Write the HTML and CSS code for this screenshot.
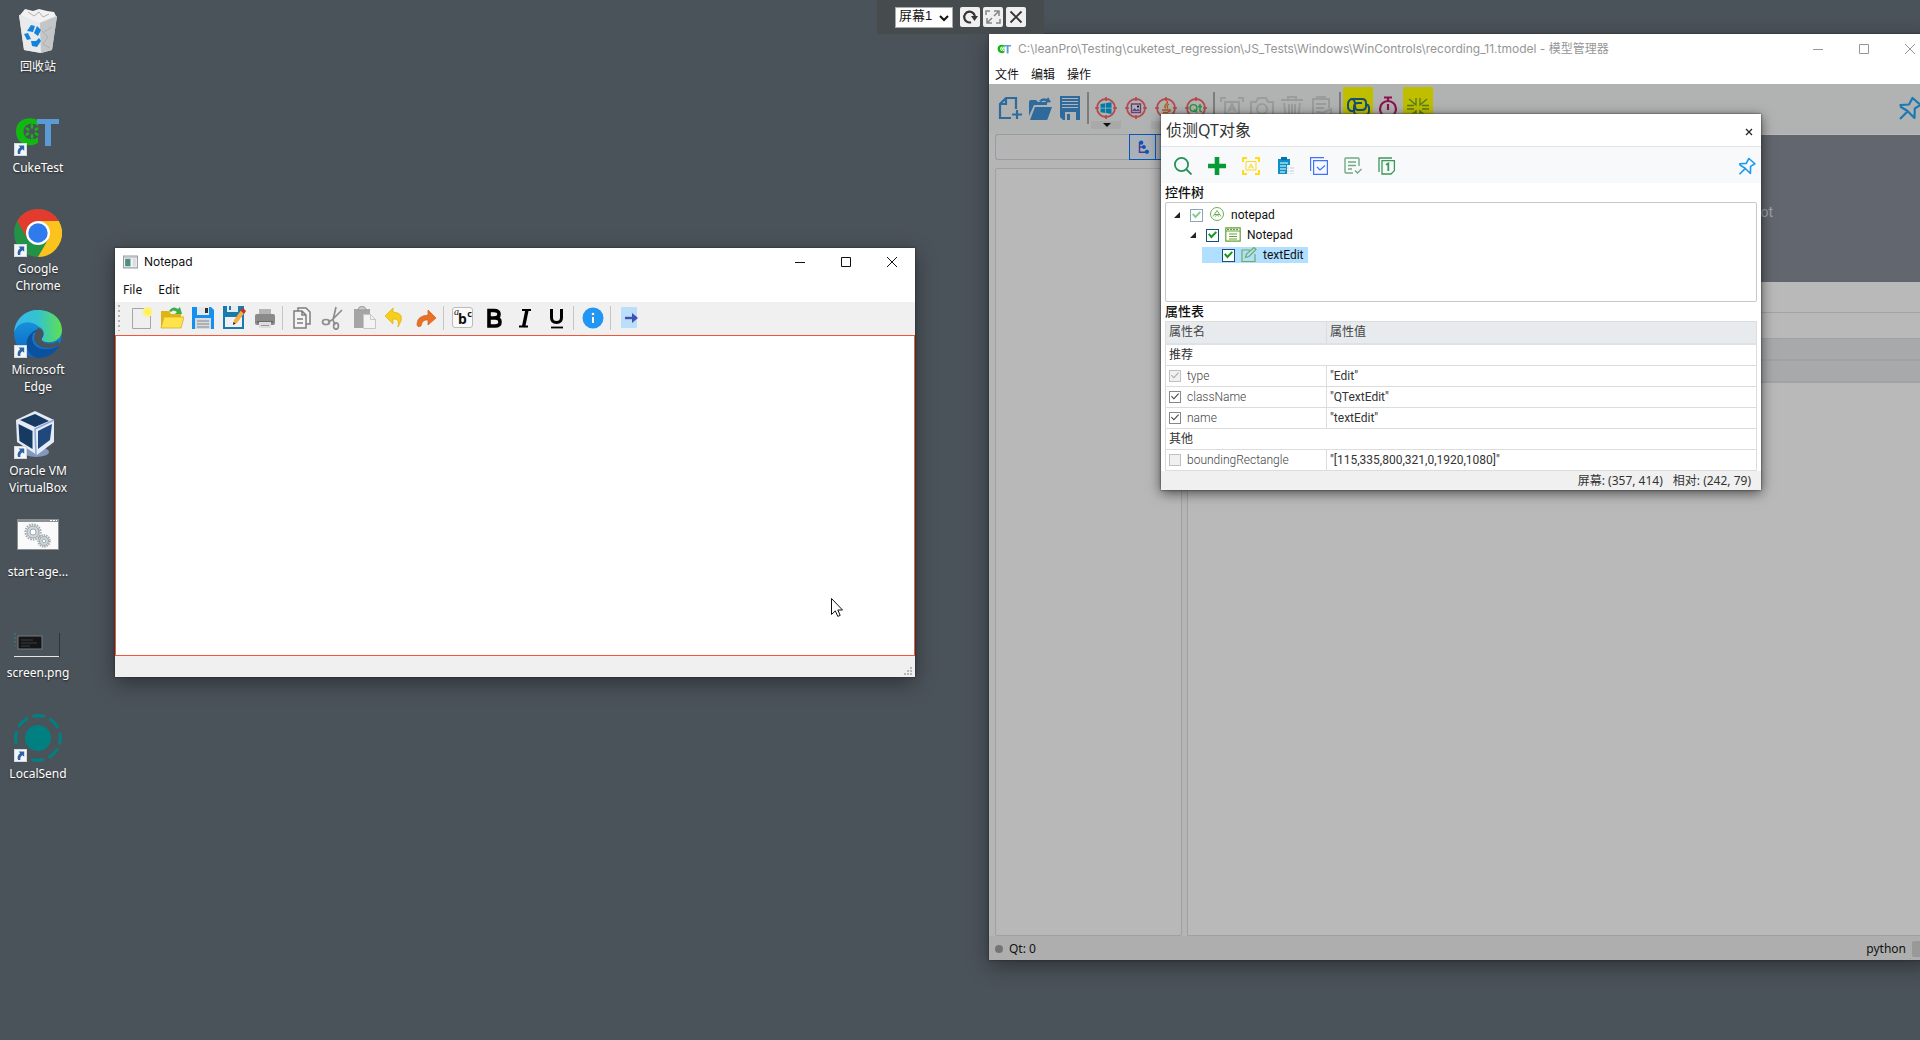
FILE: index.html
```html
<!DOCTYPE html>
<html lang="zh-CN">
<head>
<meta charset="utf-8">
<title>模型管理器</title>
<link rel="stylesheet" href="styles.css">
</head>
<body>
<svg class="defs" aria-hidden="true">
  <defs>
    <symbol id="shortcut" viewBox="0 0 13 13"><rect x=".5" y=".5" width="12" height="12" fill="#f4f6f8" stroke="#d4d8dc"/><path d="M4.600 2.400h5.600v5.400L8.400 6.200C6.600 7.400 6 8.600 6.400 11L4 11C3 8.200 3.900 5.800 6.200 4.200z" fill="#2c62a8"/></symbol>
    <symbol id="pushpin" viewBox="0 0 24 24"><path d="M14.500 2 22.500 9 16.800 12.500 16.500 22 9.500 15 3 11 2.500 9 11 8.500ZM9.500 15.500 2 23" fill="none" stroke="currentColor" stroke-width="2.200" stroke-linejoin="round"/></symbol>
    <symbol id="target" viewBox="0 0 24 24"><circle cx="12" cy="12" r="9" fill="none" stroke="#b5484a" stroke-width="1.800"/><path d="M12 1v4M12 19v4M1 12h4M19 12h4" stroke="#b5484a" stroke-width="1.600"/></symbol>
    <symbol id="ct" viewBox="0 0 48 30"><path d="M24 3.500C18-1 2 0 2 14.500S18 31 24 25.500V20c-4 4-14.500 3-14.500-5.500S20 5 24 9z" fill="#12b812"/><g fill="#12b812"><ellipse cx="18" cy="9.500" rx="1.300" ry="2.400"/><ellipse cx="18" cy="19.500" rx="1.300" ry="2.400"/><ellipse cx="13.500" cy="12" rx="2.300" ry="1.300" transform="rotate(30 13.500 12)"/><ellipse cx="22.500" cy="12" rx="2.300" ry="1.300" transform="rotate(-30 22.500 12)"/><ellipse cx="13.500" cy="17" rx="2.300" ry="1.300" transform="rotate(-30 13.500 17)"/><ellipse cx="22.500" cy="17" rx="2.300" ry="1.300" transform="rotate(30 22.500 17)"/></g><path d="M23 2h22v5h-8v22h-6V7h-8z" fill="#5b9bd5"/></symbol>
    <linearGradient id="e1" x1="0" x2="1"><stop offset="0" stop-color="#35b8f0"/><stop offset=".5" stop-color="#34c3cf"/><stop offset="1" stop-color="#5fe04c"/></linearGradient>
    <linearGradient id="e2" x1="0" y1="0" x2="0" y2="1"><stop offset="0" stop-color="#1b9de2"/><stop offset="1" stop-color="#0b66c3"/></linearGradient>
  </defs>
</svg>
<main class="desktop">
  <nav class="shortcuts" aria-label="桌面">
    <a class="shortcut" href="#"><svg class="pic" viewBox="0 0 48 48"><path d="M5 8 43 9 38 43 27 46 10 43z" fill="#d9dadb"/><path d="M5 8 10 43 27 46 26 16z" fill="#e9eaeb"/><path d="m26 16 1 30 11-3 5-34z" fill="#c3c5c7"/><path d="m6 8 5-6 8 2 6-2 8 2 7 1 2 4-17 7z" fill="#f2f2f2"/><path d="m14 5 6 4 5-4 4 5 6-3M28 24l6 6-5 7 7 4M38 20l-8 5" stroke="#aeb1b4" fill="none"/><path d="m13 24 4-6 4 1-2 6zM23 19l4 4-3 6-4-3zM10 27l4-1 3 6-4 1zM17 34l5 0 3-3 2 3-4 6-5-1z" fill="#1583dc"/></svg><span>回收站</span></a>
    <a class="shortcut" href="#"><svg class="pic" viewBox="0 0 48 48"><use href="#ct" x="0" y="9" width="48" height="30"/><use href="#shortcut" y="35" width="13" height="13"/></svg><span>CukeTest</span></a>
    <a class="shortcut" href="#"><svg class="pic" viewBox="0 0 48 48"><circle cx="24" cy="24" r="24" fill="#229247"/><path d="M3.200 12A24 24 0 0 1 44.800 12H24L13.600 30z" fill="#e33b2e"/><path d="M44.800 12A24 24 0 0 1 24 48L34.400 30 24 12z" fill="#fcc31e"/><circle cx="24" cy="24" r="12" fill="#fff"/><circle cx="24" cy="24" r="9.700" fill="#2f7bee"/><use href="#shortcut" y="35" width="13" height="13"/></svg><span>Google<br>Chrome</span></a>
    <a class="shortcut" href="#"><svg class="pic" viewBox="0 0 48 48"><circle cx="24" cy="24" r="23.800" fill="url(#e2)"/><path d="M0 23C1 8 12 0 24 0c14 0 24 9 24 20 0 9-8 13-16 12-5-1-5-3-3-5 2-3 1-8-5-11C15 9 3 12 0 23z" fill="url(#e1)"/><path d="M19 24c-4 12 8 20 26 12-4 8-12 12-21 12-11-1-18-20-2-28 4-1 7 2 7 7-1-4-8-7-10-3z" fill="#0c519e"/><path d="M24 18c4 0 6 4 5 8-2 3-2 5 2 7 4 1 10 1 13-2l2 4c-10 5-24 4-26-6 0-4 1-8 4-11z" fill="#4b535a"/><use href="#shortcut" y="35" width="13" height="13"/></svg><span>Microsoft<br>Edge</span></a>
    <a class="shortcut" href="#"><svg class="pic" viewBox="0 0 48 48"><ellipse cx="22" cy="41" rx="13" ry="5" fill="#8298bd"/><path d="M21 0 40 9v22L23 44 3 31 2 9z" fill="#e4ebf5"/><path d="M21 3 35 10 21 16 6 9z" fill="#173a63"/><path d="m4.500 13 14 7v18l-13-8z" fill="#173a63"/><path d="m38 13-14 7v18l12-9z" fill="#20487c"/><path d="m40 9-19 9 1 26" fill="none" stroke="#8ba6d8" stroke-width="1.500"/><use href="#shortcut" y="35" width="13" height="13"/></svg><span>Oracle VM<br>VirtualBox</span></a>
    <a class="shortcut" href="#"><svg class="pic" viewBox="0 0 48 48"><rect x="3.500" y="7.500" width="41" height="30" fill="#fafafa" stroke="#8b8f92"/><path d="M3 7h42v3H3z" fill="#8b9094"/><path d="M36 8.500h7" stroke="#fff" stroke-dasharray="2 1"/><g fill="none" stroke="#9ea8ae"><circle cx="19" cy="20" r="7.500" stroke-width="2.200" stroke-dasharray="1.500 1.100"/><circle cx="19" cy="20" r="6" fill="#cfd6da"/><circle cx="19" cy="20" r="3" fill="#fff"/><circle cx="30" cy="29" r="5.800" stroke-width="2" stroke-dasharray="1.400 1"/><circle cx="30" cy="29" r="4.500" fill="#cfd6da"/><circle cx="30" cy="29" r="1.800" fill="#fff"/></g></svg><span>start-age...</span></a>
    <a class="shortcut" href="#"><svg class="pic" viewBox="0 0 48 48"><path d="M0 43.500h45" stroke="#e4e8e0"/><path d="M45.500 20v24" stroke="#2f3437"/><path d="M1 20v13" stroke="#3b7fa0" stroke-dasharray="2 2"/><rect x="4" y="23" width="24" height="13" fill="#141516" stroke="#777b7d"/><path d="M7 27h12M7 30h16M7 33h9" stroke="#3a3c3d"/></svg><span>screen.png</span></a>
    <a class="shortcut" href="#"><svg class="pic" viewBox="0 0 48 48"><circle cx="24" cy="24" r="13" fill="#008080"/><circle cx="24" cy="24" r="22.300" fill="none" stroke="#008080" stroke-width="3.200" stroke-linecap="round" stroke-dasharray="10 7.514" stroke-dashoffset="5"/><use href="#shortcut" y="35" width="13" height="13"/></svg><span>LocalSend</span></a>
  </nav>

  <section class="window model">
    <header class="titlebar model-title">
      <svg class="app" viewBox="0 0 48 30"><use href="#ct"/></svg>
      <h1>C:\leanPro\Testing\cuketest_regression\JS_Tests\Windows\WinControls\recording_11.tmodel - 模型管理器</h1>
      <span class="sys"><button aria-label="最小化"><svg viewBox="0 0 10 10"><path d="M0 5.500h10"/></svg></button><button aria-label="最大化"><svg viewBox="0 0 10 10"><path d="M.5.500h9v9h-9z"/></svg></button><button aria-label="关闭"><svg viewBox="0 0 10 10"><path d="m0 0 10 10M10 0 0 10"/></svg></button></span>
    </header>
    <nav class="menu model-menu"><button>文件</button><button>编辑</button><button>操作</button></nav>
    <div class="model-body">
      <div class="model-tools">
        <button aria-label="新建"><svg viewBox="0 0 24 24" fill="none" stroke="#2f6a9c" stroke-width="2.200"><path d="M13 22H2V8l6-6h10v11M8 2v6H2M19 14v9M14 18.500h10"/></svg></button>
        <button aria-label="打开"><svg viewBox="0 0 24 24" fill="#2f6a9c"><path d="M1 6q0-2 2-2h5l2 2h9v3H6L1 20z"/><path d="M7 11h17l-4 11q0 2-2 2H2z"/><path d="M11 5q3-4 8-2l1-2 3 5-6 1 1-2q-3-1-5 1z"/></svg></button>
        <button aria-label="保存"><svg viewBox="0 0 24 24"><path d="M2 0h20v24H5l-3-3z" fill="#2f6a9c"/><path d="M4 2.500h16M4 5.500h16M4 8.500h16M4 11.500h16" stroke="#b1b3b2" stroke-width="1.200"/><path d="M7 16h11v8H7z" fill="#b1b3b2"/><path d="M9 18h3v6H9z" fill="#2f6a9c"/></svg></button>
        <i></i>
        <button class="drop" aria-label="Windows"><svg viewBox="0 0 24 24"><use href="#target"/><path d="m6.500 8 4.800-.8v4.500H6.500zm5.500-.9 5.500-.9v5.500H12zM6.500 12.500h4.800V17l-4.800-.8zm5.500 0h5.500v5.500l-5.500-.9z" fill="#007ba8"/></svg></button>
        <button aria-label="图像"><svg viewBox="0 0 24 24"><use href="#target"/><path d="M7.500 8h9v8.500h-9z" fill="none" stroke="#69407e" stroke-width="1.400"/><path d="m8 15 2.500-3 2 2 1.500-1.500L16 15z" fill="#69407e"/><circle cx="14" cy="10.500" r="1"/></svg></button>
        <button class="drop" aria-label="Java"><svg viewBox="0 0 24 24"><use href="#target"/><path d="M13 5q1 2-1 3.500t-.5 4M15 8q-3 2-1 4.500M8 14h7q2-1 1 1l-2 1M9 16.500h5M8 18.500h8" fill="none" stroke="#b0561b" stroke-width="1.300"/></svg></button>
        <button aria-label="Qt"><svg viewBox="0 0 24 24"><use href="#target"/><circle cx="9.500" cy="12" r="3.400" fill="none" stroke="#27933f" stroke-width="1.400"/><path d="m10 13.500 3 3M16 8v6.500q0 1.500 2 1M14 10.500h4" fill="none" stroke="#27933f" stroke-width="1.400"/></svg></button>
        <i></i>
        <button aria-label="截取"><svg class="off" viewBox="0 0 24 24"><path d="M1 6V2h5M18 2h5v4M1 18v4h5M18 22h5v-4M5 6h14v12H5zM8.500 15.500 12 8l3.500 7.500M10 13h4"/></svg></button>
        <button aria-label="相机"><svg class="off" viewBox="0 0 24 24"><path d="M1 6h5l2-4h8l2 4h5v16H1z"/><circle cx="12" cy="13" r="5"/></svg></button>
        <button aria-label="删除"><svg class="off" viewBox="0 0 24 24"><path d="M1 4h22M8 3V1h8v2M4 7l2 16h12l2-16M9 8v14M12 8v14M15 8v14"/></svg></button>
        <button aria-label="粘贴"><svg class="off" viewBox="0 0 24 24"><path d="M9 22H3V3h16v9M7 3V1h8v3M6 8h10M6 12h8M6 16h5M12 17l9-4v9h-9z"/></svg></button>
        <i></i>
        <button class="on" aria-label="链接"><svg viewBox="0 0 24 24" fill="none" stroke="#17506e" stroke-width="2"><path d="M9 11V8q0-5-4-5 -3 2-3 5v3q0 3 3 4h2M5 3h11q4 0 4 4v3q0 4-4 4h-4q-3 0-3-4M16 7h-4q-4 0-4 4v4q0 4 4 4h7q4 0 4-4v-3q0-3-3-4"/></svg></button>
        <button aria-label="计时"><svg viewBox="0 0 24 24" fill="none" stroke="#8e104e" stroke-width="2.200"><circle cx="12" cy="13" r="8"/><path d="M8 1.500h8M12 2v3M12 8v6"/></svg></button>
        <button class="on" aria-label="聚焦"><svg viewBox="0 0 24 24" fill="none" stroke="#557c1c" stroke-width="1.300"><path d="m3 3 7 6V2M21 3l-7 6V2M1 9.500h7M16 9.500h7M1 13h7M16 13h7M3 21l7-6v7M21 21l-7-6v7"/></svg></button>
        <button class="edge" aria-label="固定"><svg viewBox="0 0 24 24"><use href="#pushpin"/></svg></button>
      </div>
      <div class="model-main">
        <aside class="left">
          <div class="search"><input type="text" aria-label="搜索"><button aria-label="树"><svg viewBox="0 0 16 16"><path d="M4 2v12h7M4 8h4" fill="none" stroke="#4a3799" stroke-width="1.600"/><circle cx="6" cy="3" r="2.400" fill="#0757b8"/><circle cx="9" cy="8" r="2.200" fill="#0757b8"/><circle cx="12.500" cy="13.500" r="2.400" fill="#0757b8"/></svg></button><button aria-label="列表"></button></div>
          <div class="panel"></div>
        </aside>
        <div class="right">
          <div class="shot"><span>Screenshot</span></div>
          <div class="line"></div><div class="line two"></div>
          <div class="band"></div><div class="band"></div>
        </div>
      </div>
      <footer class="model-status"><span class="dot"></span><span>Qt: 0</span><span class="lang">python</span><span class="grip"></span></footer>
    </div>
  </section>

  <section class="window notepad">
    <header class="titlebar">
      <svg class="note-app" viewBox="0 0 14 12"><path d="M.5.500h13v11H.5z" fill="#f4f4f4" stroke="#9a9fa4"/><path d="M1 1h12v1.500H1z" fill="#c9cdd1"/><path d="M2 3h5v7H2z" fill="#4b8f86"/><path d="M9 3h3v7H9z" fill="#d9dde0"/></svg>
      <h2>Notepad</h2>
      <span class="sys"><button aria-label="Minimize"><svg viewBox="0 0 10 10"><path d="M0 5.500h10"/></svg></button><button aria-label="Maximize"><svg viewBox="0 0 10 10"><path d="M.5.500h9v9h-9z"/></svg></button><button aria-label="Close"><svg viewBox="0 0 10 10"><path d="m0 0 10 10M10 0 0 10"/></svg></button></span>
    </header>
    <nav class="menu"><button>File</button><button>Edit</button></nav>
    <div class="note-tools">
      <span class="handle"></span>
      <button aria-label="New"><svg viewBox="0 0 24 24"><path d="M3.500 2.500h18v20h-18z" fill="#efefef" stroke="#a5a5a5"/><circle cx="18.500" cy="6" r="5" fill="#faf28a"/><circle cx="18.500" cy="6" r="2.800" fill="#fff04a"/></svg></button>
      <button aria-label="Open"><svg viewBox="0 0 24 24"><path d="M1 5h8l2 3h10v14H1z" fill="#dfb513"/><path d="M9 5q4-6 9-2l2-2 2 7h-7l2-2q-4-3-6 0z" fill="#3fae49"/><path d="M4 11h20l-3 11H1z" fill="#ffe34d" stroke="#d9ae1b" stroke-width=".8"/></svg></button>
      <button aria-label="Save"><svg viewBox="0 0 24 24"><path d="M1 1h19l3 3v19H1z" fill="#1490f0"/><path d="M6 1h12v8H6z" fill="#e6e9eb"/><path d="M14 2h3v5h-3z" fill="#333"/><path d="M4 12h16v11H4z" fill="#d7dbde"/><path d="M6 15h12M6 18h12M6 21h12" stroke="#7f878c"/></svg></button>
      <button aria-label="Save as"><svg viewBox="0 0 24 24"><path d="M1 0h21v23H1z" fill="#1a7aae"/><path d="M5 0h11v6H5z" fill="#e4edf2"/><path d="M7 0h2v4H7z" fill="#1a7aae"/><path d="M3 11h17v10H3z" fill="#eef2f4"/><path d="m11 19 1-5 8-11 3 3-8 11z" fill="#f6ae3c"/><path d="m18 4 3-2 3 3-2 3z" fill="#c4302b"/><path d="m11 19 .5-3 2 1.500z" fill="#222"/></svg></button>
      <button aria-label="Print"><svg viewBox="0 0 24 24"><path d="M6 3h12v5H6z" fill="#b4b4b4"/><rect x="2" y="8" width="20" height="11" rx="2" fill="#8a8a8a"/><path d="M4 15h16v2H4z" fill="#6a6a6a"/><path d="M6 16h12v6H6z" fill="#ddd"/><path d="M8 19.500h8" stroke="#999"/></svg></button>
      <i></i>
      <button aria-label="Copy"><svg viewBox="0 0 24 24" fill="#f4f4f4" stroke="#7d7d7d" stroke-width="1.500"><path d="M8 2h8l4 4v12H8z"/><path d="M4 5h8l4 4v13H4zM12 5v4h4M7 13h6M7 17h6"/></svg></button>
      <button aria-label="Cut"><svg viewBox="0 0 24 24" fill="none" stroke="#8d8d8d" stroke-width="1.700"><path d="M12 14 15 1M11 14 21 4M11 14l-4 2M12 14l2 5"/><ellipse cx="5" cy="16" rx="3.500" ry="2.500"/><ellipse cx="15" cy="20" rx="2.400" ry="3.200"/></svg></button>
      <button aria-label="Paste"><svg viewBox="0 0 24 24"><path d="M2 3h16v19H2z" fill="#a5a5a5"/><path d="M6 4q0-3 4-4 4 1 4 4z" fill="#c8c8c8" stroke="#999"/><path d="M11.500 8.500h7l5 5v9h-12z" fill="#f3f3f3" stroke="#c6c6c6"/><path d="M18.500 8.500v5h5" fill="none" stroke="#c6c6c6"/></svg></button>
      <button aria-label="Undo"><svg viewBox="0 0 24 24"><path d="m10 2-8 8 8 8v-5q7-1 5 8 9-14-5-15z" fill="#f6cf1a" stroke="#dcae12" stroke-width=".7"/></svg></button>
      <button aria-label="Redo"><svg viewBox="0 0 24 24"><path d="m14 4 8 8-8 7v-5q-6-1-7 6Q3 22 3 18q0-8 11-9z" fill="#ea7026" stroke="#d35d19" stroke-width=".7"/></svg></button>
      <i></i>
      <button class="font" aria-label="Font"><span><em>a</em><b>b</b><sup>c</sup></span></button>
      <button aria-label="Bold"><svg viewBox="0 0 24 24" fill="none" stroke="#000" stroke-width="3.600"><path d="M7 4.500h5q5 0 5 3.700T12 12H7zM7 12h6q5 0 5 4t-5 4H7z"/></svg></button>
      <button aria-label="Italic"><svg viewBox="0 0 24 24" fill="none" stroke="#000"><path d="M9 4h9M6 20.500h9" stroke-width="2"/><path d="m14 4-3.500 17" stroke-width="3.400"/></svg></button>
      <button aria-label="Underline"><svg viewBox="0 0 24 24" fill="none" stroke="#000"><path d="M7.500 3v8.500q0 5 5 5t5-5V3" stroke-width="3"/><path d="M7 21.500h12" stroke-width="1.800"/></svg></button>
      <i></i>
      <button aria-label="Info"><svg viewBox="0 0 24 24"><circle cx="12" cy="12" r="10.500" fill="#2196f3"/><path d="M12 11v6" stroke="#fff" stroke-width="2"/><circle cx="12" cy="8" r="1.300" fill="#fff"/></svg></button>
      <i></i>
      <button aria-label="Exit"><svg viewBox="0 0 24 24"><rect x="3" y="1" width="16" height="21" rx="1" fill="#bbdefb"/><path d="M7 12h9" stroke="#3f51b5" stroke-width="2.400"/><path d="m14 7 6 5-6 5z" fill="#3f51b5"/></svg></button>
    </div>
    <textarea aria-label="textEdit"></textarea>
    <footer class="note-status"><svg viewBox="0 0 8 8" fill="#b8b8b8"><path d="M6 0h2v2H6zM3 3h2v2H3zM6 3h2v2H6zM0 6h2v2H0zM3 6h2v2H3zM6 6h2v2H6z"/></svg></footer>
  </section>

  <div class="screenbar">
    <label class="picker"><select aria-label="屏幕"><option>屏幕1</option></select><svg viewBox="0 0 10 7"><path d="m1 1 4 4 4-4" fill="none" stroke="#111" stroke-width="2"/></svg></label>
    <button aria-label="刷新"><svg viewBox="0 0 16 16"><path d="M9 13.300A5.400 5.400 0 1 1 13 8" fill="none" stroke="#333" stroke-width="2.200"/><path d="M9 7h7l-3.500 5z" fill="#333"/></svg></button>
    <button aria-label="全屏"><svg viewBox="0 0 16 16" fill="none" stroke="#858585" stroke-width="1.500"><path d="M1 6V2h4M15 10v4h-4M9 2h5v5M14 2 9 7M2 9v5h5M2 14l5-5"/></svg></button>
    <button aria-label="关闭"><svg viewBox="0 0 16 16"><path d="m2.500 2.500 11 11M13.500 2.500l-11 11" stroke="#333" stroke-width="1.800"/></svg></button>
  </div>

  <section class="dialog">
    <header><h2>侦测QT对象</h2><button aria-label="关闭"><svg viewBox="0 0 8 8"><path d="m1 1 6 6M7 1 1 7" stroke="#222" stroke-width="1.200"/></svg></button></header>
    <div class="dlg-tools">
      <button aria-label="搜索"><svg viewBox="0 0 18 18" fill="none" stroke="#229355" stroke-width="1.800"><circle cx="7.500" cy="7.500" r="6.600"/><path d="m12.500 12.500 5 5"/></svg></button>
      <button aria-label="添加"><svg viewBox="0 0 18 18"><path d="M9 0v18M0 9h18" stroke="#079b33" stroke-width="4.600"/></svg></button>
      <button aria-label="截取"><svg viewBox="0 0 18 18" fill="none" stroke="#ffdb1f"><path d="M1 5V1h4M13 1h4v4M1 13v4h4M13 17h4v-4" stroke-width="2"/><path d="M4 4.500h10v8.500H4zM6.500 11.500 9 7l2.500 4.500M7.500 10h3"/></svg></button>
      <button aria-label="剪贴板"><svg viewBox="0 0 18 18"><path d="M2 2h12v6h-3v9H2z" fill="#0a91c8"/><path d="M5 0h6v3H5z" fill="#0674a8"/><path d="M4 6h8M4 9h6M4 12h6M4 15h5" stroke="#fff"/><path d="M12 10v7M15 10v7M17 10v7" stroke="#c3ccd2" stroke-dasharray="2 1"/></svg></button>
      <button aria-label="全选"><svg viewBox="0 0 18 18" fill="none" stroke="#3d73ff" stroke-width="1.200"><path d="M14 .6H.6V14"/><path d="M3.600 3.600h13.800v13.800H3.600zM7 10l3 3 5-4.500"/></svg></button>
      <button aria-label="确认"><svg viewBox="0 0 18 18" fill="none" stroke="#70ab84" stroke-width="1.400"><path d="M15 9V2q0-1-1-1H2Q1 1 1 2v13q0 1 1 1h7M4 5h8M4 8.500h8M4 12h4M11 13.500l2.500 2.500 4-4"/></svg></button>
      <button aria-label="第一"><svg viewBox="0 0 18 18" fill="none" stroke="#3b9858" stroke-width="1.300"><path d="M14 1H1v14M4 3.600h12.400v10L13 17H4z"/><path d="M8 7.800 10.300 6.500V14" stroke-width="1.800"/></svg></button>
      <button class="edge" aria-label="固定"><svg viewBox="0 0 24 24"><use href="#pushpin"/></svg></button>
    </div>
    <h3>控件树</h3>
    <ul class="tree">
      <li><span class="arrow"></span><label><input type="checkbox" checked disabled><svg viewBox="0 0 16 16" fill="none" stroke="#6fae57"><circle cx="8" cy="7" r="6.500"/><path d="m4 9.500 4-6 4 6M5 7.500h6M6.500 9.500 8 7l1.500 2.500"/></svg>notepad</label></li>
      <li class="l2"><span class="arrow"></span><label><input type="checkbox" checked><svg viewBox="0 0 16 16" fill="none" stroke="#63a236" stroke-width="1.200"><path d="M.8.8h14.400v13.400H.8zM1 4h14M4 7h8M4 9.500h8M4 12h8"/><path d="M2 2.400h12" stroke-dasharray="2 1"/></svg>Notepad</label></li>
      <li class="l3"><label><input type="checkbox" checked><svg viewBox="0 0 16 16" fill="none" stroke="#6fae57" stroke-width="1.200"><path d="M14 7v7.500H1V3h8M4.500 10.500l1-3.500 7.500-6.500 2 2L8 9.500z"/></svg>textEdit</label></li>
    </ul>
    <h3>属性表</h3>
    <table>
      <thead><tr><th>属性名</th><th>属性值</th></tr></thead>
      <tbody>
        <tr><td colspan="2">推荐</td></tr>
        <tr><td><label><input type="checkbox" checked disabled>type</label></td><td>"Edit"</td></tr>
        <tr><td><label><input type="checkbox" checked>className</label></td><td>"QTextEdit"</td></tr>
        <tr><td><label><input type="checkbox" checked>name</label></td><td>"textEdit"</td></tr>
        <tr><td colspan="2">其他</td></tr>
        <tr><td><label><input type="checkbox" disabled>boundingRectangle</label></td><td>"[115,335,800,321,0,1920,1080]"</td></tr>
      </tbody>
    </table>
    <footer><span>屏幕: (357, 414)</span><span>相对: (242, 79)</span></footer>
  </section>

  <svg class="cursor" viewBox="0 0 12 19"><path d="M.5.500v16l3.800-3.600 2.500 5.500 2.400-1-2.400-5.400h4.700z" fill="#fff" stroke="#111"/></svg>
</main>
</body>
</html>
```
FILE: styles.css
```css
* { box-sizing: border-box; }
body { margin: 0; font: 12px/16px "Noto Sans", "Noto Sans CJK SC", sans-serif; color: #111; }
h1, h2, h3, ul { margin: 0; padding: 0; font-size: 12px; font-weight: 400; }
button { display: flex; align-items: center; justify-content: center; padding: 0; border: 0; background: none; font: inherit; color: inherit; }
svg { display: block; flex: none; }
.defs { position: absolute; width: 0; height: 0; }
.desktop { position: relative; min-height: 100vh; overflow: hidden; background: #4b535a; }

/* desktop shortcuts */
.shortcuts { display: flex; flex-direction: column; width: 76px; padding-top: 7px; }
.shortcut { display: flex; flex-direction: column; align-items: center; gap: 3px; height: 101px; color: #fff; text-align: center; text-decoration: none; line-height: 17px; text-shadow: 0 1px 2px #222; white-space: nowrap; }
.pic { width: 48px; height: 48px; }

.window { position: absolute; display: flex; flex-direction: column; background: #fff; box-shadow: 0 0 2px #222, 0 6px 20px #0006; }
.titlebar { display: flex; align-items: center; font-family: Inter, "Noto Sans CJK SC", sans-serif; }
.sys { display: flex; margin-left: auto; }
.sys button { width: 46px; height: 28px; }
.sys svg { width: 10px; height: 10px; fill: none; stroke: currentColor; }
.menu { display: flex; }

/* model manager */
.model { left: 989px; right: -13px; top: 34px; height: 926px; }
.model-title { height: 30px; padding-left: 8px; gap: 6px; color: #969696; }
.model-title .app { width: 15px; height: 10px; }
.model-menu { height: 20px; padding: 2px 0 0 6px; gap: 12px; }
.model-body { display: flex; flex: 1; flex-direction: column; background: #b5b5b5; }
.model-tools { display: flex; padding: 3px 8px 0 6px; height: 50px; background: #b1b3b2; }
.model-tools button { flex-direction: column; justify-content: flex-start; width: 30px; height: 42px; padding-top: 9px; }
.model-tools svg { width: 24px; height: 24px; }
.model-tools i { width: 2px; height: 32px; margin: 5px 2px; background: #7c7c7c; }
.model-tools .off { fill: none; stroke: #9c9c9c; stroke-width: 2; }
.model-tools .on { background: #bfbf00; }
.model-tools .drop { position: relative; }
.model-tools .drop::after { content: ""; width: 30px; height: 8px; margin-top: 1px; background: #a9a9a9; }
.model-tools .drop::before { content: ""; position: absolute; left: 12px; bottom: 2px; border: 4px solid transparent; border-top-color: #111; border-bottom: 0; }
.model-tools .edge { margin-left: auto; color: #1b79b5; }
.model-main { display: flex; flex: 1; gap: 5px; padding-left: 6px; }
.left { display: flex; flex-direction: column; gap: 8px; width: 187px; }
.search { display: flex; height: 26px; }
.search input { flex: 1; min-width: 0; border: 1px solid #989da1; border-right: 0; border-radius: 3px 0 0 3px; background: #b5b5b5; }
.search button { width: 27px; border: 1px solid #0757b8; background: #aab0b8; }
.search button + button { margin-left: -1px; }
.search svg { width: 14px; height: 14px; }
.panel { flex: 1; border: 1px solid #a0a0a0; border-radius: 2px; background: #b8b8b8; }
.right { display: flex; flex: 1; flex-direction: column; border-left: 1px solid #a0a0a0; border-bottom: 1px solid #a0a0a0; background: #b9b9b9; }
.shot { display: flex; justify-content: flex-end; align-items: center; height: 147px; margin-top: 1px; padding: 6px 160px 0 0; background: #62666e; color: #a0a3a8; font: 14px/18px Roboto, sans-serif; }
.line { height: 31px; border-bottom: 1px solid #a0a2a4; }
.line.two { height: 26px; }
.band { height: 22px; border-bottom: 2px solid #a0a2a4; background: #a8a9ab; }
.model-status { display: flex; align-items: center; gap: 6px; height: 24px; padding: 1px 0 0 6px; background: #aeaeae; }
.dot { width: 8px; height: 8px; border-radius: 50%; background: #747474; }
.lang { margin-left: auto; }
.grip { width: 21px; height: 16px; border-radius: 2px 0 0 2px; background: #999; }

/* notepad */
.notepad { left: 115px; top: 248px; width: 800px; height: 429px; }
.notepad .titlebar { height: 28px; padding-left: 8px; gap: 6px; }
.note-app { width: 15px; height: 14px; }
.notepad .menu { height: 26px; padding: 1px 0 0 8px; gap: 16px; }
.note-tools { display: flex; align-items: center; height: 33px; padding: 0 0 2px 3px; background: #f0f0f0; }
.handle { width: 2px; height: 26px; margin-right: 5px; background: repeating-linear-gradient(#b4b4b4 0 2px, transparent 2px 5px); }
.note-tools button { width: 31px; height: 30px; }
.note-tools svg { width: 24px; height: 24px; }
.note-tools i { width: 1px; height: 24px; margin: 0 3px 0 2px; background: #c6c6c6; }
.font span { position: relative; width: 21px; height: 21px; border: 1px solid #bbb; border-radius: 3px; background: #fafafa; line-height: 22px; }
.font b { font-size: 14px; }
.font em, .font sup { position: absolute; top: 0; left: 1px; font: italic 10px/8px "Liberation Serif", serif; }
.font sup { left: auto; right: 0; top: 2px; font: bold 9px/8px "Noto Sans", sans-serif; }
.notepad textarea { flex: 1; margin: 0; border: 1px solid #f0583c; outline: 0; background: #fff; resize: none; }
.note-status { display: flex; align-items: flex-end; justify-content: flex-end; height: 21px; padding: 2px 3px; background: #f0f0f0; }
.note-status svg { width: 8px; height: 8px; }
.cursor { position: absolute; left: 831px; top: 598px; width: 12px; height: 19px; }

/* screen switcher */
.screenbar { position: absolute; left: 877px; top: 0; display: flex; align-items: center; gap: 3px; height: 34px; padding: 0 18px; background: #464b4e; }
.picker { position: relative; margin-right: 4px; }
.picker select { display: block; width: 58px; height: 21px; padding: 0 0 2px 3px; border: 1px solid #aaa; border-radius: 0; appearance: none; background: #fff; font: 13px/16px "Liberation Sans", "Noto Sans CJK SC", sans-serif; color: #111; }
.picker svg { position: absolute; right: 4px; top: 8px; width: 10px; height: 7px; }
.screenbar button { width: 20px; height: 20px; border-radius: 2px; background: #f0f0f0; }
.screenbar button svg { width: 16px; height: 16px; }

/* object spy dialog */
.dialog { position: absolute; left: 1161px; top: 114px; width: 600px; display: flex; flex-direction: column; background: #fff; box-shadow: 0 0 2px #333, 0 3px 12px #0009; }
.dialog header { display: flex; align-items: center; justify-content: space-between; height: 33px; padding: 0 8px 0 5px; border-bottom: 1px solid #e2e4e6; }
.dialog header h2 { font-size: 16px; line-height: 22px; color: #333; }
.dialog header button { padding-top: 4px; }
.dialog header svg { width: 8px; height: 8px; }
.dlg-tools { display: flex; align-items: center; gap: 16px; height: 36px; padding: 2px 5px 0 13px; background: #f8f9fb; }
.dlg-tools svg { width: 18px; height: 18px; }
.dlg-tools .edge { margin-left: auto; color: #1e9bf0; }
.dialog h3 { height: 19px; padding: 0 4px; font-size: 13px; line-height: 18px; font-weight: 500; }
.tree { height: 100px; margin: 0 4px; padding: 4px 0 0 4px; border: 1px solid #c6c6c6; border-radius: 2px; list-style: none; font-family: Roboto, sans-serif; }
.tree li { display: flex; align-items: center; width: max-content; height: 16px; margin-bottom: 4px; padding-right: 4px; }
.tree .l2 { margin-left: 16px; }
.tree .l3 { margin-left: 32px; padding-left: 20px; background: #b0dfff; }
.tree label, td label { display: flex; align-items: center; gap: 6px; }
.tree svg { width: 16px; height: 16px; }
.arrow { width: 6px; height: 6px; margin: 0 10px 0 4px; background: #222; clip-path: polygon(100% 0, 100% 100%, 0 100%); }
.dialog input { width: 13px; height: 13px; margin: 0; appearance: none; border: 1px solid #194e7c; background: #fff; }
.dialog input:checked::before { content: ""; display: block; width: 9px; height: 9px; margin: 1px; background: #109a18; clip-path: polygon(0 45%, 18% 30%, 38% 55%, 85% 8%, 100% 22%, 38% 90%); }
.tree input:disabled { opacity: .5; }
.dialog table { margin: 0 4px; border: 1px solid #c6c6c6; border-collapse: collapse; table-layout: fixed; color: #333; font-family: Roboto, "Noto Sans CJK SC", sans-serif; }
.dialog th, .dialog td { height: 21px; padding: 0 3px; border: 1px solid #dcdcdc; text-align: left; font-weight: 400; line-height: 20px; }
.dialog th { height: 22px; border-bottom: 2px solid #dee2e6; background: #e7ebee; color: #444; }
.dialog th:first-child { width: 161px; }
td label { color: #444; font-weight: 300; }
.dialog td input { width: 12px; height: 12px; border-color: #888; }
.dialog td input:checked::before { width: 8px; height: 8px; background: #444; clip-path: polygon(0 50%, 10% 40%, 35% 68%, 90% 8%, 100% 18%, 36% 86%); }
.dialog td input:disabled { border-color: #c0c0c0; background: #f0f0f0; }
.dialog td input:disabled::before { background: #aaa; }
.dialog footer { display: flex; justify-content: flex-end; gap: 10px; height: 19px; padding-right: 10px; background: #f0f0f0; line-height: 20px; color: #333; }
```
